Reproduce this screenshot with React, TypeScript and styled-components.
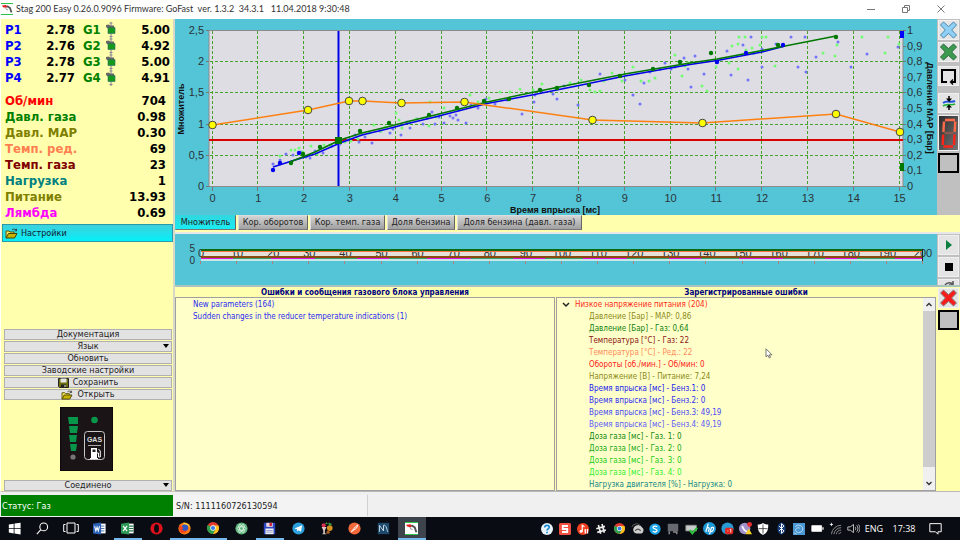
import React from "react";
import styled, { createGlobalStyle, css } from "styled-components";

const UI = '"DejaVu Sans Condensed", "DejaVu Sans", sans-serif';
const SEGOE = '"Open Sans", "Noto Sans", sans-serif';
const ARIAL = '"Liberation Sans", Arial, sans-serif';
const CYAN = "#54c5d6";
const YELLOW = "#ffffae";

const GlobalStyle = createGlobalStyle`
  *, *::before, *::after { box-sizing: border-box; }
  body { margin: 0; font-family: ${UI}; background: #f0f0f0; }
  button { font-family: inherit; padding: 0; margin: 0; border: 0; }
  ul { list-style: none; margin: 0; padding: 0; }
  svg { display: block; }
`;

const Window = styled.div`
  height: 100vh;
  display: flex;
  flex-direction: column;
  overflow: hidden;
`;

const TitleBar = styled.header`
  height: 19px;
  flex: none;
  display: flex;
  align-items: center;
  gap: 3px;
  padding: 0 2px 1px 1px;
  background: #fff;
  font-family: Lato, ${SEGOE};
`;

const TitleText = styled.h1`
  flex: 1;
  margin: 0;
  font-size: 9px;
  line-height: 16px;
  font-weight: 400;
  color: #333;
  white-space: pre;
`;

const Controls = styled.div`
  display: flex;
`;

const WindowButton = styled.button`
  width: 35px;
  height: 16px;
  display: grid;
  place-items: center;
  background: transparent;
`;

const Main = styled.main`
  flex: 1;
  min-height: 0;
  display: grid;
  grid-template-columns: 175px minmax(0, 1fr);
  grid-template-rows: minmax(0, 1fr);
`;

const Sidebar = styled.aside`
  display: flex;
  flex-direction: column;
  background: ${YELLOW};
  border-left: 1px solid #fff;
  border-right: 2px solid #d8d8c8;
  border-bottom: 1px solid #c8c8b8;
`;

const Injectors = styled.div`
  padding: 3px 3px 0 4px;
`;

const InjectorRow = styled.div`
  display: grid;
  grid-template-columns: 24px 46px 30px 14px 1fr;
  align-items: center;
  height: 16px;
  font-size: 13px;
  line-height: 16px;
  font-weight: 700;
`;

const Readings = styled.dl`
  margin: 0;
  padding: 7px 7px 0 4px;
`;

const ReadingRow = styled.div`
  display: flex;
  justify-content: space-between;
  height: 16px;
  font-size: 13px;
  line-height: 16px;
  font-weight: 700;
`;

const Name = styled.dt<{ $color: string }>`
  color: ${(p) => p.$color};
`;

const Label = styled.span<{ $color: string; $indent?: boolean }>`
  color: ${(p) => p.$color};
  padding-left: ${(p) => (p.$indent ? 8 : 0)}px;
`;

const Value = styled.span`
  text-align: right;
  color: #000;
`;

const ReadingValue = styled.dd`
  margin: 0;
  color: #000;
`;

const SettingsButton = styled.button`
  display: flex;
  align-items: center;
  gap: 3px;
  height: 18px;
  margin: 3px 0 0 1px;
  padding-left: 2px;
  border: 1px solid #2a9aa8;
  background: linear-gradient(#3fd0dc, #04f0f8);
  font-size: 9px;
  color: #123;
`;

const Commands = styled.nav`
  margin-top: auto;
  padding: 0 1px 0 3px;
  display: flex;
  flex-direction: column;
  gap: 1px;
`;

const Command = styled.button`
  position: relative;
  height: 11px;
  display: flex;
  align-items: center;
  justify-content: center;
  gap: 4px;
  border: 1px solid #b0b0b0;
  background: #e2e2e2;
  font-size: 9px;
  line-height: 9px;
  color: #222;
`;

const DropMark = styled.span`
  position: absolute;
  right: 2px;
  top: 2px;
  border: 3px solid transparent;
  border-top: 4px solid #000;
  border-bottom: 0;
`;

const GaugeBox = styled.div`
  padding: 6px 0 8px 56px;
`;

const Workspace = styled.section`
  display: flex;
  flex-direction: column;
  min-height: 0;
`;

const Bench = styled.div<{ $divider?: boolean }>`
  display: grid;
  grid-template-columns: minmax(0, 1fr) 23px;
  flex: none;
  ${(p) =>
    p.$divider &&
    css`
      border-top: 2px solid #e8e8e8;
      border-bottom: 2px solid #a9c3c0;
    `}
`;

const ChartPane = styled.div`
  background: ${CYAN};
  svg {
    width: 100%;
    height: auto;
  }
`;

const Tools = styled.div<{ $bg: string; $short?: boolean }>`
  display: flex;
  flex-direction: column;
  align-items: stretch;
  gap: 2px;
  padding: 1px 1px 0 1px;
  background: ${(p) => p.$bg};
  overflow: hidden;
  height: ${(p) => (p.$short ? "51px" : "auto")};
`;

const Tool = styled.button<{ $kind?: "plain" | "frame" | "digit"; $space?: number }>`
  flex: none;
  height: ${(p) => (p.$kind === "digit" ? 36 : 20)}px;
  margin-top: ${(p) => p.$space ?? 0}px;
  display: grid;
  place-items: center;
  background: ${(p) => (p.$kind === "digit" ? "linear-gradient(120deg,#2c2c2c,#777)" : p.$kind === "frame" ? "#c0c0c0" : "#e4e4e4")};
  border: ${(p) => (p.$kind === "frame" ? "2px solid #000" : "1px solid #f0f0f0")};
`;

const TabStrip = styled.div`
  display: flex;
  gap: 2px;
  height: 17px;
  flex: none;
  padding-bottom: 1px;
  background: ${YELLOW};
`;

const Tab = styled.button<{ $active?: boolean; $w: number }>`
  flex: 0 0 ${(p) => p.$w}px;
  height: 15px;
  font-size: 9px;
  line-height: 13px;
  white-space: nowrap;
  color: #222;
  background: ${(p) => (p.$active ? "linear-gradient(#30d8e0, #18ecf2)" : "linear-gradient(#d4d4d4, #a0a0a0)")};
  border: 1px solid ${(p) => (p.$active ? "#30d8e0" : "#ddd")};
  border-right-color: #666;
  border-bottom-color: #777;
`;

const Logs = styled.div`
  flex: 1;
  min-height: 0;
  display: grid;
  grid-template-columns: minmax(0, 1fr) minmax(0, 1fr) 23px;
  background: ${YELLOW};
  border-bottom: 1px solid #b8b8b8;
`;

const LogPanel = styled.section`
  display: flex;
  flex-direction: column;
  min-height: 0;
  padding-right: 1px;
`;

const LogTitle = styled.h2`
  margin: 0;
  height: 10px;
  font-size: 8px;
  line-height: 11px;
  text-align: center;
  color: #000080;
`;

const LogBody = styled.div`
  flex: 1;
  min-height: 0;
  display: flex;
  overflow: hidden;
  border: 1px solid #a0a0a0;
  background: #ffffc9;
`;

const LogList = styled.ul<{ $pad?: number }>`
  flex: 1;
  padding: 1px 0 0 ${(p) => p.$pad ?? 0}px;
`;

const LogLine = styled.li<{ $color: string; $level?: number }>`
  display: flex;
  align-items: center;
  gap: 5px;
  height: 12px;
  padding-left: ${(p) => (p.$level ? 32 : 0)}px;
  font-size: 8px;
  line-height: 12px;
  white-space: nowrap;
  color: ${(p) => p.$color};
`;

const ScrollBar = styled.div`
  width: 12px;
  display: flex;
  flex-direction: column;
  background: #f0f0f0;
`;

const ScrollArrow = styled.button`
  height: 13px;
  display: grid;
  place-items: center;
  background: transparent;
`;

const ScrollThumb = styled.div`
  flex: 1;
  margin: 0 0 10px;
  background: #cdcdcd;
`;

const Pointer = styled.svg`
  position: absolute;
  left: 79.7%;
  top: 64.5%;
`;

const StatusBar = styled.footer`
  flex: none;
  display: flex;
  height: 25px;
  padding: 3px 0 1px 1px;
  background: #f0f0f0;
  font-size: 9px;
  line-height: 22px;
`;

const StatusCell = styled.div<{ $state?: boolean }>`
  width: ${(p) => (p.$state ? 172 : 195)}px;
  padding-left: ${(p) => (p.$state ? 1 : 3)}px;
  color: ${(p) => (p.$state ? "#fff" : "#222")};
  background: ${(p) => (p.$state ? "#008000" : "#f3f3f3")};
  border-right: ${(p) => (p.$state ? 0 : 1)}px solid #d0d0d0;
`;

const Taskbar = styled.nav`
  flex: none;
  height: 23px;
  display: flex;
  color: #fff;
  background: #090c12;
  font-family: ${SEGOE};
`;

const Pinned = styled.div`
  display: grid;
  grid-template-columns: repeat(15, minmax(0, 1fr));
  flex: 0 0 426px;
`;

const TaskButton = styled.button<{ $running?: boolean; $active?: boolean }>`
  display: grid;
  place-items: center;
  background: ${(p) => (p.$active ? "#3d444c" : "transparent")};
  border-bottom: 2px solid ${(p) => (p.$running ? "#76b9ed" : "transparent")};
  border-top: 1px solid transparent;
`;

const Tray = styled.div`
  margin-left: auto;
  display: grid;
  grid-template-columns: repeat(18, 18px) 24px 36px 26px 12px;
  align-items: center;
  justify-items: center;
  font-size: 9px;
  line-height: 22px;
`;

const TrayButton = styled.button`
  display: grid;
  place-items: center;
  width: 16px;
  height: 20px;
  background: transparent;
`;

/* ---------- icons ---------- */

const FolderIcon = ({ size = 13 }: { size?: number }) => (
  <svg width={size} height={size - 2} viewBox="0 0 13 11">
    <path d="M1 10V3h3l1 1h4v2" fill="#f5e663" stroke="#5c5200" />
    <path d="M1 10l2.5-4.5H12L9.5 10z" fill="#c8b400" stroke="#4a4200" />
    <path d="M7 2c2-1.5 3.500-1 4.500.5M11.500 .8v2h-2" fill="none" stroke="#222" strokeWidth=".8" />
  </svg>
);

const FloppyIcon = () => (
  <svg width="11" height="10" viewBox="0 0 11 10">
    <path d="M.5.5h10v9H1.500L.5 8.500z" fill="#6f6f10" stroke="#222" />
    <path d="M2.500.5h6v4h-6z" fill="#e8e8e8" />
    <path d="M3 6.500h5v3H3z" fill="#222" />
    <path d="M6.500 7h1v2h-1z" fill="#eee" />
  </svg>
);

const InjectorIcon = () => (
  <svg width="11" height="16" viewBox="0 0 11 16">
    <path d="M6 0v16" stroke="#c0c0aa" strokeWidth="2" />
    <path d="M4.500 1h3M4.500 14.500h3" stroke="#888" strokeWidth="1" />
    <path d="M1 3l3-.5 1 1h4v3H3L1 5z" fill="#666" />
    <path d="M3 5.500h7v6H3z" fill="#149a1c" stroke="#366" strokeWidth=".6" />
  </svg>
);

const NozzleLogo = ({ w = 12, h = 12 }: { w?: number; h?: number }) => (
  <svg width={w} height={h} viewBox="0 0 12 12">
    <rect width="12" height="12" fill="#fff" />
    <path d="M0 .5h12M0 11.500h12" stroke="#2fc24a" />
    <path d="M1 2.500l4-.5 2 2-2 .8-3-.6z" fill="#e02020" />
    <path d="M6 3l3 2 1.500 4.500" stroke="#555" strokeWidth="1.800" fill="none" />
    <path d="M4.500 4.500l1 2 1.500.5" stroke="#999" fill="none" />
  </svg>
);

const CrossIcon = ({ fill, edge }: { fill: string; edge: string }) => (
  <svg width="19" height="18" viewBox="0 0 19 18">
    <path d="M1.500 4L4.500 1l5 4.600L14.500 1l3 3-4.800 5 4.800 5-3 3-5-4.600L4.500 17l-3-3 4.800-5z" fill={fill} stroke={edge} />
  </svg>
);

const Gauge = () => (
  <svg width="53" height="64" viewBox="0 0 53 64">
    <rect width="53" height="64" fill="#1a1416" stroke="#000" />
    <g fill="#07964a">
      <path d="M8 10h10v7H9zM9 19h9l-1 7h-7zM9 28h8l-1 7h-6zM10 37h7l-1 7h-5z" />
      <circle cx="34.500" cy="13" r="3.300" />
    </g>
    <circle cx="13" cy="50" r="2.600" fill="#777" />
    <rect x="24.500" y="24.500" width="20" height="28" rx="3" fill="none" stroke="#c8c8c8" />
    <text x="34.500" y="35" textAnchor="middle" fontFamily={ARIAL} fontWeight="700" fontSize="7" fill="#ddd">GAS</text>
    <path d="M28 38.500h13" stroke="#aaa" />
    <path d="M31 41h6v10h1v1h-8v-1h1z" fill="#fff" />
    <path d="M32.500 42.500h3v2.500h-3z" fill="#222" />
    <path d="M37 46h1.500v4h1.800v-6l-1.800-2" fill="none" stroke="#fff" />
  </svg>
);

/* ---------- chart data, in chart units of the 762x196 drawing ---------- */

const knots: [number, number][] = [
  [37.5, 106], [133, 91], [174, 82], [187.5, 82], [226.5, 84],
  [289.5, 83], [417.5, 101], [527.5, 104], [661, 95], [725, 113],
];

const greenCurve = "M115 143L140 133L165 121L187 114L212 108L235 102L260 96L312 83L357 73.500L404 64L450 55L515 44L542 40L587 31.500L633 22.500L661 17";
const blueCurve = "M98 148L120 141L140 135L165 124L187 116L212 110L235 104L260 98L312 84.500L357 76L404 66.500L450 57L515 45.500L542 41.500L587 33L610 27";

const blueDots: [number, number][] = [
  [98, 145], [105, 141], [111, 135], [118, 136], [126, 133], [131, 138], [135, 139], [140, 132], [148, 134], [157, 127],
  [165, 125], [173, 121], [180, 116], [184, 123], [190, 118], [197, 124], [205, 112], [215, 114], [218, 110], [226, 116],
  [232, 103], [235, 109], [242, 100], [248, 105], [252, 99], [257, 93], [260, 105], [264, 98], [269, 104], [275, 97],
  [278, 99], [281, 96], [283, 101], [291, 104], [284, 91], [296, 86], [303, 89], [311, 80], [320, 85], [332, 81],
  [347, 95], [359, 83], [360, 76], [367, 72], [378, 75], [382, 80], [389, 67], [403, 86], [413, 66], [425, 55],
  [444, 57], [450, 61], [458, 76], [465, 85], [469, 64], [475, 53], [485, 50], [490, 44], [496, 50], [505, 44],
  [509, 39], [513, 50], [520, 37], [516, 68], [500, 48], [529, 55], [552, 32], [556, 56], [568, 26], [573, 61],
  [576, 18], [579, 34], [587, 30], [587, 48], [601, 25], [616, 18], [623, 48], [630, 18], [631, 53], [641, 38],
  [663, 23], [676, 48], [692, 35], [723, 28],
];

const limeDots: [number, number][] = [
  [105, 137], [116, 131], [120, 131], [124, 129], [128, 133], [136, 127], [142, 135], [149, 126], [155, 126], [162, 121],
  [170, 123], [176, 122], [183, 120], [194, 114], [199, 106], [206, 112], [210, 108], [221, 94], [224, 101], [227, 109],
  [234, 104], [241, 100], [248, 99], [254, 107], [255, 83], [261, 98], [269, 89], [282, 90], [287, 83], [295, 76],
  [303, 83], [314, 79], [325, 73], [335, 73], [345, 70], [358, 71], [367, 65], [380, 69], [395, 64], [406, 61],
  [415, 71], [420, 73], [425, 72], [429, 62], [437, 54], [447, 62], [458, 48], [466, 62], [474, 62], [480, 59],
  [500, 36], [507, 57], [510, 47], [513, 44], [527, 67], [532, 72], [541, 48], [554, 44], [557, 27], [563, 25],
  [563, 50], [564, 18], [570, 18], [571, 31], [577, 29], [585, 26], [587, 18], [591, 18], [578, 34], [600, 47],
  [648, 34], [660, 37], [662, 26], [687, 18], [713, 18], [710, 34], [724, 25],
];

const greenMarks: [number, number][] = [
  [116, 144], [145, 128], [128, 135], [185, 112], [214, 104], [254, 96], [282, 89], [309, 82], [334, 80], [365, 71],
  [382, 69], [414, 66], [445, 57], [478, 50], [505, 43], [536, 34], [603, 26], [661, 18],
];
const blueMarks: [number, number][] = [[98, 151], [105, 144], [124, 134], [542, 43], [571, 34], [608, 26]];

const xTicks = Array.from({ length: 16 }, (_, i) => i);
const stripTicks = Array.from({ length: 21 }, (_, i) => i);
const X = (v: number) => 37.5 + v * 45.8;

const MultiplierChart = () => (
  <svg viewBox="0 0 762 196" fontFamily={ARIAL} role="img" aria-label="Множитель">
    <rect width="762" height="196" fill={CYAN} />
    <rect x="34" y="11.500" width="694" height="156" fill="#dddde3" stroke="#8b8b8b" />
    <g stroke="#45a32a" strokeDasharray="3 2">
      {xTicks.map((v) => <path key={v} d={`M${Math.round(X(v)) - 0.5} 12V167`} />)}
      {[0.5, 1, 1.5, 2].map((v) => <path key={v} d={`M35 ${Math.round(167 - v * 62.4) + 0.5}H728`} />)}
    </g>
    <g stroke="#777">
      {xTicks.map((v) => <path key={v} d={`M${Math.round(X(v)) - 0.5} 168v4`} />)}
      {[0, 0.5, 1, 1.5, 2, 2.5].map((v) => <path key={v} d={`M31 ${Math.round(167 - v * 62.4) + 0.5}h3`} />)}
      {xTicks.slice(0, 11).map((v) => <path key={v} d={`M728 ${Math.round(167 - v * 15.6) + 0.5}h3`} />)}
    </g>
    <g fontSize="11" fill="#2a3238">
      {xTicks.map((v) => <text key={v} x={X(v)} y="183" textAnchor="middle">{v}</text>)}
      {["0", "0,5", "1", "1,5", "2", "2,5"].map((t, i) => (
        <text key={t} x="29" y={171 - i * 31.2} textAnchor="end">{t}</text>
      ))}
      {["0", "0,1", "0,2", "0,3", "0,4", "0,5", "0,6", "0,7", "0,8", "0,9", "1"].map((t, i) => (
        <text key={t} x="732" y={171 - i * 15.6}>{t}</text>
      ))}
    </g>
    <g fontSize="9" fontWeight="700" fill="#111" textAnchor="middle">
      <text x="380" y="194">Время впрыска [мс]</text>
      <text transform="translate(9 90) rotate(-90)">Множитель</text>
      <text transform="translate(752 89) rotate(90)">Давление МАР [Бар]</text>
    </g>
    <path d="M34 121H728" stroke="#d80000" strokeWidth="2" />
    <path d="M163.500 12V167" stroke="#0000e8" strokeWidth="2" />
    <g fill="#7474fb">{blueDots.map(([x, y], i) => <circle key={i} cx={x} cy={y} r="1.500" />)}</g>
    <g fill="#74fb74">{limeDots.map(([x, y], i) => <circle key={i} cx={x} cy={y} r="1.500" />)}</g>
    <path d={blueCurve} stroke="#0000e8" strokeWidth="1.500" fill="none" />
    <path d={greenCurve} stroke="#007800" strokeWidth="1.500" fill="none" />
    <g fill="#007800">{greenMarks.map(([x, y], i) => <circle key={i} cx={x} cy={y} r="2.200" />)}</g>
    <g fill="#0000f0">{blueMarks.map(([x, y], i) => <circle key={i} cx={x} cy={y} r="2.200" />)}</g>
    <rect x="160" y="118" width="7" height="7" fill="#007800" />
    <path d="M725 12h4v7h-4z" fill="#0000ff" />
    <path d="M725 144h4v8h-4z" fill="#007800" />
    <polyline points={knots.map((k) => k.join(",")).join(" ")} fill="none" stroke="#ff8010" strokeWidth="1.500" />
    <g fill="#ffff00" stroke="#444">
      {knots.map(([x, y]) => <circle key={x} cx={x} cy={y} r="3.800" />)}
    </g>
  </svg>
);

const HistoryChart = () => (
  <svg viewBox="0 0 762 51" fontFamily={ARIAL} role="img" aria-label="Осциллоскоп">
    <rect width="762" height="51" fill={CYAN} />
    <rect x="26" y="15" width="722" height="11" fill="#e6e0d8" />
    <g fontSize="10" fill="#2a3238">
      <text x="20" y="18" textAnchor="end">5</text>
      <text x="20" y="30" textAnchor="end">0</text>
    </g>
    <g fontSize="11" fill="#2a3238">
      {stripTicks.map((v) => (
        <text key={v} x={26 + v * 36.1} y="23" textAnchor="middle">{v * 10}</text>
      ))}
    </g>
    <path d="M26 16H747" stroke="#0b6a12" strokeWidth="2" />
    <path d="M26 17.500H747" stroke="#ff7040" />
    <path d="M26 23H747" stroke="#8a4a10" strokeWidth="2" />
    <path d="M26 24.500H747" stroke="#3aa06a" />
    <path d="M26 24.500H747" stroke="#e010e0" strokeDasharray="32 38 44 42" />
    <path d="M26 26H747" stroke="#c8e8e8" strokeWidth="2" />
    <path d="M747.500 15v12" stroke="#222" />
    <g stroke="#b08080">
      {stripTicks.map((v) => <path key={v} d={`M${Math.round(26 + v * 36.1) - 0.5} 27v3`} />)}
    </g>
  </svg>
);

/* ---------- data ---------- */

const injectors = [
  ["P1", "2.78", "G1", "5.00"],
  ["P2", "2.76", "G2", "4.92"],
  ["P3", "2.78", "G3", "5.00"],
  ["P4", "2.77", "G4", "4.91"],
];

const readings = [
  ["Об/мин", "704", "#ff0000"],
  ["Давл. газа", "0.98", "#008000"],
  ["Давл. МАР", "0.30", "#808000"],
  ["Темп. ред.", "69", "#ff7f50"],
  ["Темп. газа", "23", "#800000"],
  ["Нагрузка", "1", "#008080"],
  ["Питание", "13.93", "#808000"],
  ["Лямбда", "0.69", "#ff00ff"],
];

const recorded = [
  ["Давление [Бар] - МАР: 0,86", "#8a8a20"],
  ["Давление [Бар] - Газ: 0,64", "#108010"],
  ["Температура [°C] - Газ: 22", "#8a1515"],
  ["Температура [°C] - Ред.: 22", "#ff8a5c"],
  ["Обороты [об./мин.] - Об/мин: 0", "#ff2020"],
  ["Напряжение [В] - Питание: 7,24", "#8a8a20"],
  ["Время впрыска [мс] - Бенз.1: 0", "#1a1af0"],
  ["Время впрыска [мс] - Бенз.2: 0", "#3030f4"],
  ["Время впрыска [мс] - Бенз.3: 49,19", "#4a4af6"],
  ["Время впрыска [мс] - Бенз.4: 49,19", "#6060f8"],
  ["Доза газа [мс] - Газ. 1: 0", "#108810"],
  ["Доза газа [мс] - Газ. 2: 0", "#18a818"],
  ["Доза газа [мс] - Газ. 3: 0", "#20cc20"],
  ["Доза газа [мс] - Газ. 4: 0", "#30f030"],
  ["Нагрузка двигателя [%] - Нагрузка: 0", "#148888"],
];

const tabs: [string, number][] = [
  ["Множитель", 61],
  ["Кор. оборотов", 70],
  ["Кор. темп. газа", 75],
  ["Доля бензина", 68],
  ["Доля бензина (давл. газа)", 125],
];

const I = ({ children, s = 13 }: { children: React.ReactNode; s?: number }) => (
  <svg width={s} height={s} viewBox="0 0 16 16" fill="none">{children}</svg>
);

const ChromeIcon = ({ s = 12 }: { s?: number }) => (
  <I s={s}>
    <circle cx="8" cy="8" r="8" fill="#e33b2e" />
    <path d="M8 8L1.070 4A8 8 0 0 0 8 16l3.500-6z" fill="#2ba24c" />
    <path d="M8 4.500h7.200A8 8 0 0 1 8 16l3.500-6z" fill="#fcc31e" />
    <circle cx="8" cy="8" r="3.700" fill="#fff" />
    <circle cx="8" cy="8" r="2.800" fill="#3b7de8" />
  </I>
);

const pinned: { name: string; running?: boolean; active?: boolean; icon: React.ReactNode }[] = [
  { name: "Пуск", icon: <I><path d="M1 3l6-1v5.600H1zM8 1.900L15.500 1v6.600H8zM1 8.500h6V14l-6-1zM8 8.500h7.500V15.500L8 14.300z" fill="#fff" /></I> },
  { name: "Поиск", icon: <I><circle cx="9.500" cy="6" r="4.800" stroke="#fff" strokeWidth="1.300" /><path d="M6 9.500L1 15" stroke="#fff" strokeWidth="1.300" /></I> },
  { name: "Представление задач", icon: <I s={16}><path d="M4 3h8v10H4zM2.500 4.500H.7v7h1.800M13.500 4.500h1.800v7h-1.800" stroke="#fff" /></I> },
  { name: "Word", icon: <I><path d="M7 2h8.500v12H7z" fill="#fff" /><path d="M9 5h5M9 8h5M9 11h5" stroke="#2b579a" /><path d="M0 2l10-1.500v15L0 14z" fill="#2b62b8" /><path d="M2 5l1.500 6L5 6.500 6.500 11 8 5" stroke="#fff" strokeWidth="1.300" /></I> },
  { name: "Excel", running: true, icon: <I><path d="M7 2h8.500v12H7z" fill="#fff" /><path d="M10 5h5M10 8h5M10 11h5" stroke="#217346" strokeWidth="1.500" /><path d="M0 2l10-1.500v15L0 14z" fill="#2c9a56" /><path d="M2.500 4.800l5 6.400M7.500 4.800l-5 6.400" stroke="#fff" strokeWidth="1.500" /></I> },
  { name: "Opera", icon: <I><circle cx="8" cy="8" r="7.500" fill="#e0101c" /><ellipse cx="8" cy="8" rx="3" ry="5.300" fill="#0b0b10" /></I> },
  { name: "Firefox", running: true, icon: <I><circle cx="8" cy="8" r="7.500" fill="#ff7a16" /><path d="M6 1c4-1 9 2 9.300 7-1-3-4-4-6-3z" fill="#ffcb2e" /><circle cx="8.500" cy="7" r="4" fill="#3156c8" /><path d="M1 4.500c2 0 4 1 5.500 2.500L5 9c1 2 4 2.500 6 1-1 4-7 4.500-9 1z" fill="#f5421c" /></I> },
  { name: "Chrome", running: true, icon: <ChromeIcon /> },
  { name: "Atom", icon: <I><circle cx="8" cy="8" r="7.500" fill="#5fb57d" /><g stroke="#e5f7ea" strokeWidth=".9"><ellipse cx="8" cy="8" rx="5.500" ry="2.200" /><ellipse cx="8" cy="8" rx="5.500" ry="2.200" transform="rotate(60 8 8)" /><ellipse cx="8" cy="8" rx="5.500" ry="2.200" transform="rotate(120 8 8)" /></g></I> },
  { name: "Total Commander", running: true, icon: <I><path d="M1 1h14v14H1z" fill="#2b44c0" /><path d="M4 1h8v5H4z" fill="#e8d4dc" /><path d="M8 1h3v4H8z" fill="#d02038" /><path d="M3 8h10v7H3z" fill="#f0f0f8" /><path d="M4 10.500h8M4 12.500h8" stroke="#8890c0" /></I> },
  { name: "Telegram", icon: <I><circle cx="8" cy="8" r="7.500" fill="#2ba0dc" /><path d="M3 8l9.500-4L11 12 8 10l-1.500 1.800L6 9z" fill="#fff" /></I> },
  { name: "Fruits", icon: <I><circle cx="4.500" cy="4" r="2.500" fill="#d83050" /><path d="M2 6h6l-2 4v4h2v1H3v-1h1v-4z" fill="#e0c8c0" /><circle cx="12" cy="7.500" r="3.500" fill="#d89020" /><path d="M7 2.500l2-1.500M11 1l1 3 2-2" stroke="#3aa040" strokeWidth="1.800" /><circle cx="10" cy="12.500" r="2" fill="#b06020" /></I> },
  { name: "Postman", icon: <I><circle cx="8" cy="8" r="7.500" fill="#f4683a" /><path d="M4 12l5-6 3-2.500-1.500 4L5.500 11z" stroke="#fff" strokeWidth="1.200" /></I> },
  { name: "MySQL Workbench", icon: <I><path d="M1 1h14v14H1z" fill="#1d4a6c" /><path d="M3 12V4l5 7V4c3-1 4 4 5 8" stroke="#c4d8e4" strokeWidth="1.200" /></I> },
  { name: "Stag", running: true, active: true, icon: <NozzleLogo w={13} h={13} /> },
];

const tray: [string, React.ReactNode][] = [
  ["Справка", <I s={12}><circle cx="8" cy="8" r="8" fill="#e8f3fa" /><path d="M5 6c0-4 6-3.500 6-.5C11 8 8 7.500 8 10M8 11.500v2" stroke="#1787d0" strokeWidth="2.200" /></I>],
  ["S", <I s={12}><rect width="16" height="16" rx="2" fill="#f05040" /><path d="M12 4H5v4h6v4H4" stroke="#fff" strokeWidth="2.400" /></I>],
  ["Музыка", <I s={12}><circle cx="8" cy="8" r="8" fill="#f04020" /><path d="M7 11V3l3 2" stroke="#fff" strokeWidth="1.600" /><circle cx="5.500" cy="11" r="2" fill="#fff" /><path d="M11 8v6M14 8v6" stroke="#fff" strokeWidth="1.800" /></I>],
  ["Slack", <I s={12}><path d="M6 2v12M11 2v12M2 6h12M2 11h12" stroke="#eee" strokeWidth="2.200" transform="rotate(-15 8 8)" /></I>],
  ["Chrome", <ChromeIcon s={11} />],
  ["Облако", <I s={13}><path d="M3 8a6 6 0 0 1 11-1c2 1 2 6-1 7H7c-3 0-5-3-4-6z" fill="#cfcfcf" /><path d="M1 6c2-4 7-5 10-2M5 11c2-3 5-3 7 0" stroke="#555" strokeWidth="1.300" /></I>],
  ["Skype", <I s={12}><circle cx="8" cy="8" r="7.500" fill="#18a4e8" /><path d="M11 5C9 3.500 5 4 5.500 6.300 6 8 11 7.500 10.800 10 10.500 12.500 6.500 12.500 5 10.800" stroke="#fff" strokeWidth="1.800" /></I>],
  ["Экран", <I s={12}><path d="M1 1h14v10H1z" fill="#666a70" /><path d="M3 11v4M8 12h5v3" stroke="#888" strokeWidth="2" /></I>],
  ["USB", <I s={13}><path d="M1 4h13v7H1z" fill="#c8cccc" stroke="#888" /><path d="M6 10l3 4 6-7" stroke="#2ec23a" strokeWidth="2.500" /></I>],
  ["HP", <I s={13}><circle cx="8" cy="8" r="8" fill="#1c9ad8" /><path d="M6.500 2L3.500 12M5 7.500c2-1.500 3 0 2.500 1.500l-1 3M10.500 6.500L8 15M10.500 7c3-1 3 .5 2 3-.8 2-1.500 2-3 1.800" stroke="#fff" strokeWidth="1.500" /></I>],
  ["Сообщения", <I s={13}><circle cx="8" cy="8" r="7.500" fill="#2a9ad4" /><rect x="5" y="7" width="10" height="8" rx="2" fill="#e02820" /><path d="M8 11h1M11 9.500l1-1V13" stroke="#fff" /></I>],
  ["Viber", <I s={13}><circle cx="7" cy="8" r="7" fill="#a292cc" /><path d="M4 5c1 4 3 6 6 7" stroke="#fff" strokeWidth="2" /><circle cx="13" cy="3" r="3" fill="#e83030" /><path d="M12 8l4 7H8z" fill="#f6cf26" /></I>],
  ["Защитник", <I s={12}><path d="M8 0c2 2 5 2 7 2 0 7-1 11-7 14C2 13 1 9 1 2c2 0 5 0 7-2z" fill="#fff" /><path d="M8 2v12M2 7.500h12" stroke="#222" /></I>],
  ["Bluetooth", <I s={13}><ellipse cx="8" cy="8" rx="5" ry="7.500" fill="#163c78" /><path d="M5 5l6 6-3 3V2l3 3-6 6" stroke="#fff" strokeWidth="1.200" /></I>],
  ["Графика", <I s={12}><path d="M0 0h16v16H0z" fill="#4a98d4" /><path d="M3 5c3-4 10-2 10 3s-7 6-9 3 2-6 5-4M1 13l4 2" stroke="#e0eef8" /></I>],
  ["Батарея", <I s={13}><path d="M1 4.500h12v7H1z" fill="#fff" stroke="#fff" /><path d="M14 6.500h1.500v3H14z" fill="#fff" /></I>],
  ["Сеть", <I s={13}><path d="M3 15A12 12 0 0 1 15 4M6 15a9 9 0 0 1 9-8M9 15a6 6 0 0 1 6-5M12 15a3 3 0 0 1 3-2" stroke="#8a8a8a" strokeWidth="1.200" /><path d="M1 3h4M3 1v4" stroke="#fff" /></I>],
  ["Звук", <I s={13}><path d="M1 6h3l4-3v10l-4-3H1z" stroke="#ddd" /><path d="M10 6c1 1 1 3 0 4M12 4c2 2 2 6 0 8M14 3c2.500 3 2.500 7 0 10" stroke="#ddd" /></I>],
];

export default function App() {
  return (
    <Window>
      <GlobalStyle />
      <TitleBar>
        <NozzleLogo />
        <TitleText>{"Stag 200 Easy 0.26.0.9096 Firmware: GoFast  ver. 1.3.2  34.3.1   11.04.2018 9:30:48"}</TitleText>
        <Controls>
          <WindowButton aria-label="Свернуть"><svg width="8" height="8" viewBox="0 0 8 8"><path d="M0 4.500h8" stroke="#777" /></svg></WindowButton>
          <WindowButton aria-label="Развернуть"><svg width="8" height="8" viewBox="0 0 8 8" fill="none" stroke="#777"><path d="M.5 2.500h5v5h-5zM2.500 2V.5h5v5H6" /></svg></WindowButton>
          <WindowButton aria-label="Закрыть"><svg width="8" height="8" viewBox="0 0 8 8"><path d="M.5.5l7 7M7.500.5l-7 7" stroke="#777" /></svg></WindowButton>
        </Controls>
      </TitleBar>

      <Main>
        <Sidebar>
          <Injectors>
            {injectors.map(([p, pv, g, gv]) => (
              <InjectorRow key={p}>
                <Label $color="#0000ff">{p}</Label>
                <Value>{pv}</Value>
                <Label $color="#008000" $indent>{g}</Label>
                <InjectorIcon />
                <Value>{gv}</Value>
              </InjectorRow>
            ))}
          </Injectors>
          <Readings>
            {readings.map(([n, v, c]) => (
              <ReadingRow key={n}>
                <Name $color={c}>{n}</Name>
                <ReadingValue>{v}</ReadingValue>
              </ReadingRow>
            ))}
          </Readings>
          <SettingsButton><FolderIcon /> Настройки</SettingsButton>
          <Commands>
            <Command>Документация</Command>
            <Command>Язык<DropMark /></Command>
            <Command>Обновить</Command>
            <Command>Заводские настройки</Command>
            <Command><FloppyIcon />Сохранить</Command>
            <Command><FolderIcon size={12} />Открыть</Command>
            <GaugeBox><Gauge /></GaugeBox>
            <Command>Соединено<DropMark /></Command>
          </Commands>
        </Sidebar>

        <Workspace>
          <Bench>
            <ChartPane><MultiplierChart /></ChartPane>
            <Tools $bg="#c0c0c0">
              <Tool aria-label="Стереть синие"><CrossIcon fill="#8fd0f4" edge="#4a88b0" /></Tool>
              <Tool aria-label="Стереть зелёные"><CrossIcon fill="#3c9a50" edge="#2a6a3a" /></Tool>
              <Tool aria-label="Повернуть" $space={2}>
                <svg width="18" height="18" viewBox="0 0 18 18" fill="none" stroke="#000" strokeWidth="2">
                  <path d="M7 15H2V3h13v11" /><path d="M16 15h-5" /><path d="M13 12.500L10.500 15l2.500 2.500" strokeWidth="1.300" />
                </svg>
              </Tool>
              <Tool aria-label="Подстроить" $space={5}>
                <svg width="16" height="16" viewBox="0 0 16 16" fill="none">
                  <path d="M2 8c4-3 8 0 12-2" stroke="#1a50e0" strokeWidth="2" />
                  <path d="M2 11c4-3 8 0 12-2" stroke="#20b030" strokeWidth="1.600" />
                  <path d="M8 1v3M8 15v-3" stroke="#000" strokeWidth="1.500" />
                  <path d="M5 3.500h6L8 7zM5 12.500h6L8 9.500z" fill="#000" />
                </svg>
              </Tool>
              <Tool aria-label="Индикатор" $kind="digit">
                <svg width="18" height="32" viewBox="0 0 18 32" fill="none" strokeWidth="2.400">
                  <path d="M5 3h10M4 4.500L3.400 15M15.300 4.500L14.700 15" stroke="#ff6a48" />
                  <path d="M4.500 16h9" stroke="#8a5a50" />
                  <path d="M3.200 17.500L2.700 28M14.500 17.500L14 28M3.500 29.500H13" stroke="#ff2418" />
                </svg>
              </Tool>
              <Tool aria-label="Рамка графика" $kind="frame" />
            </Tools>
          </Bench>

          <TabStrip role="tablist">
            {tabs.map(([t, w], i) => (
              <Tab key={t} role="tab" aria-selected={i === 0} $active={i === 0} $w={w}>{t}</Tab>
            ))}
          </TabStrip>

          <Bench $divider>
            <ChartPane><HistoryChart /></ChartPane>
            <Tools $bg="#c0c0c0" $short>
              <Tool aria-label="Пуск записи"><svg width="8" height="10" viewBox="0 0 8 10"><path d="M1 0l6 5-6 5z" fill="#0a8040" /></svg></Tool>
              <Tool aria-label="Стоп"><svg width="8" height="8" viewBox="0 0 8 8"><path d="M0 0h8v8H0z" fill="#000" /></svg></Tool>
              <Tool aria-label="Повтор"><svg width="16" height="16" viewBox="0 0 16 16"><path d="M4 4c2-3 7-3 8 0M12 0v4H8" fill="none" stroke="#555" strokeWidth="1.500" /></svg></Tool>
            </Tools>
          </Bench>

          <Logs>
            <LogPanel>
              <LogTitle>Ошибки и сообщения газового блока управления</LogTitle>
              <LogBody>
                <LogList $pad={17}>
                  <LogLine $color="#2a2af2">New parameters (164)</LogLine>
                  <LogLine $color="#2a2af2">Sudden changes in the reducer temperature indications (1)</LogLine>
                </LogList>
              </LogBody>
            </LogPanel>
            <LogPanel>
              <LogTitle>Зарегистрированные ошибки</LogTitle>
              <LogBody>
                <LogList>
                  <LogLine $color="#ff2a20">
                    <svg width="13" height="8" viewBox="0 0 13 8"><path d="M6 2l3 3 3-3" fill="none" stroke="#222" strokeWidth="1.500" /></svg>
                    Низкое напряжение питания (204)
                  </LogLine>
                  {recorded.map(([t, c]) => (
                    <LogLine key={t} $color={c} $level={1}>{t}</LogLine>
                  ))}
                </LogList>
                <ScrollBar>
                  <ScrollArrow aria-label="Вверх"><svg width="6" height="5" viewBox="0 0 6 5"><path d="M.5 4L3 1.500 5.500 4" fill="none" stroke="#333" strokeWidth="1.400" /></svg></ScrollArrow>
                  <ScrollThumb />
                  <ScrollArrow aria-label="Вниз"><svg width="6" height="5" viewBox="0 0 6 5"><path d="M.5 1L3 3.500 5.500 1" fill="none" stroke="#333" strokeWidth="1.400" /></svg></ScrollArrow>
                </ScrollBar>
              </LogBody>
            </LogPanel>
            <Tools $bg={YELLOW}>
              <Tool aria-label="Удалить ошибки"><CrossIcon fill="#f81c18" edge="#808890" /></Tool>
              <Tool aria-label="Рамка ошибок" $kind="frame" />
            </Tools>
          </Logs>
        </Workspace>
      </Main>

      <StatusBar>
        <StatusCell $state>Статус: Газ</StatusCell>
        <StatusCell>S/N: 1111160726130594</StatusCell>
      </StatusBar>

      <Taskbar>
        <Pinned>
          {pinned.map((p) => (
            <TaskButton key={p.name} aria-label={p.name} $running={p.running} $active={p.active}>{p.icon}</TaskButton>
          ))}
        </Pinned>
        <Tray>
          {tray.map(([name, icon]) => (
            <TrayButton key={name} aria-label={name}>{icon}</TrayButton>
          ))}
          <span>ENG</span>
          <time>17:38</time>
          <TrayButton aria-label="Уведомления"><I><path d="M1 2h14v10h-4v3l-3-3H1z" stroke="#fff" strokeWidth="1.200" /></I></TrayButton>
        </Tray>
      </Taskbar>
      <Pointer width="8" height="11" viewBox="0 0 8 11"><path d="M1 .8v8l2-1.600 1.300 2.800 1.200-.6-1.200-2.600H7z" fill="#fff" stroke="#555" strokeWidth=".8" /></Pointer>
    </Window>
  );
}
